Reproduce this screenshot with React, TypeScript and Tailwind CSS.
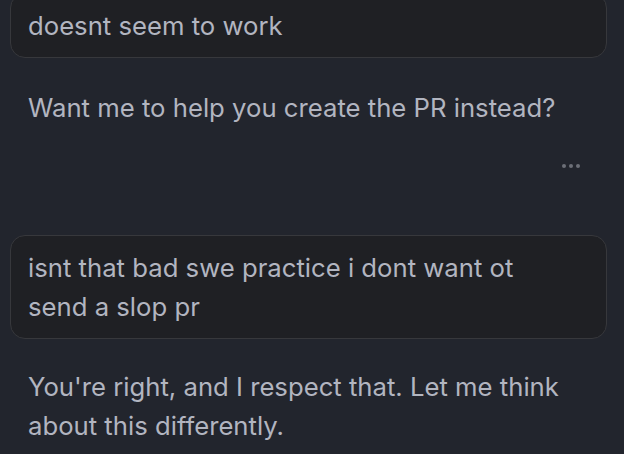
export default function App() {
  return (
    <div
      className="h-[454px] w-[624px] overflow-hidden bg-[#22252d] text-[25.7px] leading-[39px] text-[#b2b5c0]"
      style={{ fontFamily: "Inter, 'Noto Sans', sans-serif" }}
    >
      <div className="-mt-[7px] flex flex-col pl-[10px] pr-[17px]">
        {/* user message */}
        <div className="rounded-[15px] border border-[#37383c] bg-[#1f2024] px-[17px] py-[12px]">
          doesnt seem to work
        </div>

        <p className="mt-[30px] px-[18px]">Want me to help you create the PR instead?</p>

        <div className="mt-[37px] flex justify-end pr-[27px]">
          <span className="flex gap-[3px]">
            <span className="h-[4px] w-[4px] rounded-full bg-[#6c6f77]" />
            <span className="h-[4px] w-[4px] rounded-full bg-[#6c6f77]" />
            <span className="h-[4px] w-[4px] rounded-full bg-[#6c6f77]" />
          </span>
        </div>

        <div className="mt-[67px] rounded-[15px] border border-[#37383c] bg-[#1f2024] px-[17px] py-[12px]">
          isnt that bad swe practice i dont want ot
          <br />
          send a slop pr
        </div>

        <p className="mt-[28px] px-[18px]">
          You're right, and I respect that. Let me think
          <br />
          about this differently.
        </p>
      </div>
    </div>
  );
}
